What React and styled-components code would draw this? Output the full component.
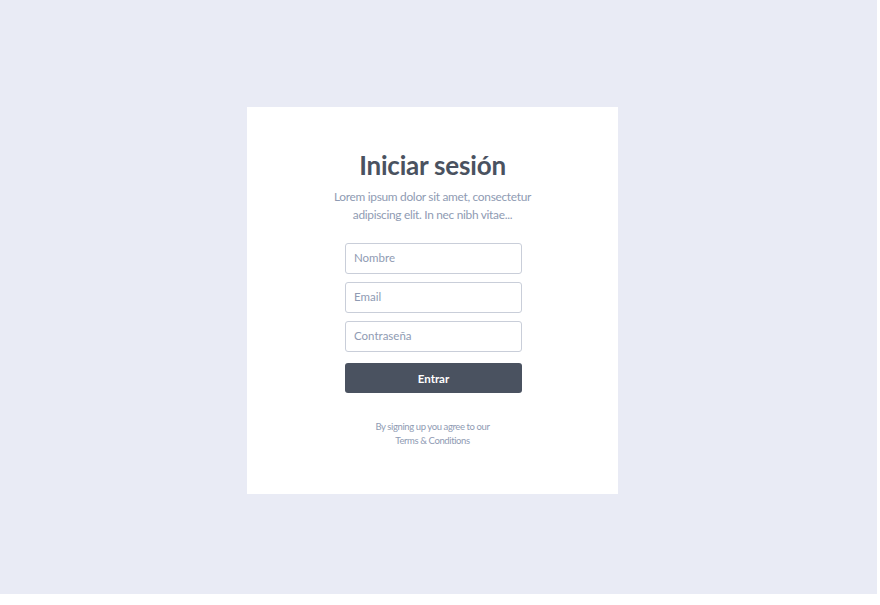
import React from "react";
import styled, { createGlobalStyle } from "styled-components";

const Global = createGlobalStyle`
  html, body { margin: 0; padding: 0; background: #ffffff; }
  body { font-family: Lato, "Open Sans", sans-serif; }
  * { box-sizing: border-box; }
`;

const Stage = styled.div`
  width: 877px;
  height: 594px;
  background: #e9ebf5;
  padding: 107px 0 0 247px;
`;

const Card = styled.div`
  width: 371px;
  height: 387px;
  background: #ffffff;
  display: flex;
  flex-direction: column;
  align-items: center;
  padding-top: 43px;
`;

const Title = styled.h1`
  margin: 0;
  font-family: Lato, sans-serif;
  font-weight: 700;
  font-size: 26px;
  line-height: 30px;
  color: #4a5260;
  letter-spacing: -0.2px;
`;

const Subtitle = styled.p`
  margin: 8px 0 0;
  text-align: center;
  font-size: 11.9px;
  line-height: 18px;
  letter-spacing: -0.3px;
  color: #8f9bb3;
`;

const Form = styled.form`
  margin-top: 19px;
  width: 177px;
  display: flex;
  flex-direction: column;
  gap: 8px;
  margin-left: 2px;
`;

const Input = styled.input`
  width: 100%;
  height: 31px;
  border: 1px solid #c9ced9;
  border-radius: 3px;
  padding: 0 8px 2px;
  font-family: Lato, sans-serif;
  font-size: 11.5px;
  color: #4a5260;
  outline: none;
  &::placeholder { color: #8f9bb3; }
`;

const Button = styled.button`
  margin-top: 3px;
  width: 100%;
  height: 30px;
  border: none;
  border-radius: 3px;
  background: #4a5260;
  color: #ffffff;
  font-family: Lato, sans-serif;
  font-weight: 700;
  font-size: 11.5px;
  cursor: pointer;
`;

const Footer = styled.p`
  margin: 27px 0 0;
  text-align: center;
  font-size: 9.5px;
  line-height: 14px;
  letter-spacing: -0.4px;
  color: #8f9bb3;
`;

export default function App() {
  return (
    <>
      <Global />
      <Stage>
        <Card>
          <Title>Iniciar sesión</Title>
          <Subtitle>
            Lorem ipsum dolor sit amet, consectetur
            <br />
            adipiscing elit. In nec nibh vitae...
          </Subtitle>
          <Form onSubmit={(e) => e.preventDefault()}>
            <Input type="text" placeholder="Nombre" />
            <Input type="email" placeholder="Email" />
            <Input type="password" placeholder="Contraseña" />
            <Button type="submit">Entrar</Button>
          </Form>
          <Footer>
            By signing up you agree to our
            <br />
            Terms &amp; Conditions
          </Footer>
        </Card>
      </Stage>
    </>
  );
}
